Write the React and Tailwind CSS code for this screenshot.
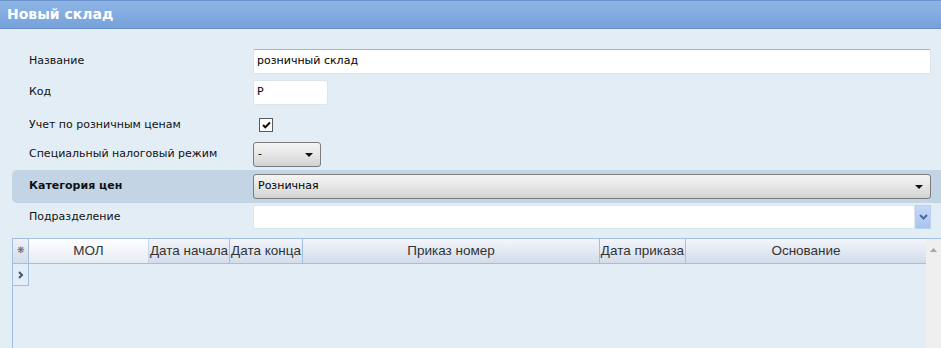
import React from "react";

const Arrow = () => (
  <svg width="8" height="4" viewBox="0 0 8 4"><path d="M0 0h8L4 4z" fill="#111" /></svg>
);

export default function App() {
  const label = "w-[241px] shrink-0 pl-[17px] text-[11px] text-[#111]";
  return (
    <div className="w-[941px] h-[348px] overflow-hidden bg-[#e3edf6] flex flex-col" style={{ fontFamily: '"DejaVu Sans", Tahoma, sans-serif' }}>
      <div className="h-[29px] shrink-0 border-t border-b border-t-[#6b95cf] border-b-[#6790cb] bg-gradient-to-b from-[#8fb5e6] to-[#76a2da] pl-[7px] flex items-center text-white font-bold text-[14px]">
        Новый склад
      </div>
      <div className="ml-[12px] mt-[20px] flex flex-col">
        <div className="flex items-center h-[25px]">
          <div className={label}>Название</div>
          <div className="flex-1 mr-[10px] h-[25px] bg-white border border-[#dde4ec] border-t-[#b0b0b0] rounded-[2px] flex items-center pl-[3px] text-[11px] text-black">розничный склад</div>
        </div>
        <div className="flex items-center h-[25px] mt-[6px]">
          <div className={label}>Код</div>
          <div className="w-[75px] h-[25px] bg-white border border-[#dde4ec] rounded-[2px] flex items-center pl-[3px] text-[11px] text-black">Р</div>
        </div>
        <div className="flex items-center h-[28px] mt-[6px]">
          <div className={label}>Учет по розничным ценам</div>
          <div className="ml-[6px] w-[14px] h-[14px] bg-white border border-[#5a5a5a] flex items-center justify-center">
            <svg width="9" height="8" viewBox="0 0 9 8"><path d="M1 4l2.3 2.3L8 1.5" stroke="#111" strokeWidth="2" fill="none" /></svg>
          </div>
        </div>
        <div className="flex items-center h-[31px]">
          <div className={label}>Специальный налоговый режим</div>
          <div className="w-[68px] h-[25px] rounded-[3px] border border-[#7b7b7b] bg-gradient-to-b from-[#f4f4f4] via-[#e6e6e6] to-[#d2d2d2] flex items-center justify-between pl-[4px] pr-[7px] text-[11px] text-black">
            <span>-</span><Arrow />
          </div>
        </div>
        <div className="flex items-center h-[33px] bg-[#c3d4e5] rounded-l-[5px]">
          <div className={label + " font-bold"}>Категория цен</div>
          <div className="flex-1 mr-[10px] h-[25px] rounded-[3px] border border-[#7b7b7b] bg-gradient-to-b from-[#f4f4f4] via-[#e6e6e6] to-[#d2d2d2] flex items-center justify-between pl-[4px] pr-[7px] text-[11px] text-black">
            <span>Розничная</span><Arrow />
          </div>
        </div>
        <div className="flex items-center h-[28px]">
          <div className={label}>Подразделение</div>
          <div className="flex-1 h-[24px] bg-white border border-[#dde4ec] rounded-[2px]"></div>
          <div className="w-[16px] h-[24px] mr-[10px] border border-[#bcd0ef] bg-gradient-to-b from-[#c6daf7] to-[#a9c3ef] flex items-center justify-center">
            <svg width="9" height="6" viewBox="0 0 9 6"><path d="M1 1l3.5 3.5L8 1" stroke="#4a6a9c" strokeWidth="2" fill="none" /></svg>
          </div>
        </div>
      </div>
      <div className="ml-[12px] mt-[7px] flex-1 flex border-l border-[#a3bfe0] border-t">
        <div className="flex-1 flex flex-col">
          <div className="flex h-[25px] border-b border-[#a3bfe0] text-[13.5px] text-[#333]" style={{ fontFamily: '"Liberation Sans", Arial, sans-serif' }}>
            <div className="w-[16px] border-r border-[#a3bfe0] bg-gradient-to-b from-[#eef2f9] to-[#d3dcea] flex items-center justify-center text-[9px] text-[#667]">❋</div>
            <div className="w-[120px] border-r border-[#c5d5ea] bg-gradient-to-b from-[#ffffff] to-[#e6ecf5] flex items-center justify-center">МОЛ</div>
            <div className="w-[81px] border-r border-[#a3bfe0] bg-gradient-to-b from-[#f3f6fb] to-[#d3dcea] flex items-center justify-center whitespace-nowrap">Дата начала</div>
            <div className="w-[73px] border-r border-[#a3bfe0] bg-gradient-to-b from-[#f3f6fb] to-[#d3dcea] flex items-center justify-center whitespace-nowrap">Дата конца</div>
            <div className="w-[297px] border-r border-[#a3bfe0] bg-gradient-to-b from-[#f3f6fb] to-[#d3dcea] flex items-center justify-center">Приказ номер</div>
            <div className="w-[86px] border-r border-[#a3bfe0] bg-gradient-to-b from-[#f3f6fb] to-[#d3dcea] flex items-center justify-center whitespace-nowrap">Дата приказа</div>
            <div className="flex-1 bg-gradient-to-b from-[#f3f6fb] to-[#d3dcea] flex items-center justify-center">Основание</div>
          </div>
          <div className="w-[16px] h-[22px] border-r border-b border-[#a3bfe0] flex items-center justify-center">
            <svg width="6" height="8" viewBox="0 0 6 8"><path d="M1 1l3 3-3 3" stroke="#3f5680" strokeWidth="2" fill="none" /></svg>
          </div>
        </div>
        <div className="w-[15px] bg-[#efefef] flex justify-center pt-[9px]">
          <svg width="7" height="4" viewBox="0 0 7 4"><path d="M0 4L3.5 0 7 4z" fill="#a8a8a8" /></svg>
        </div>
      </div>
    </div>
  );
}
